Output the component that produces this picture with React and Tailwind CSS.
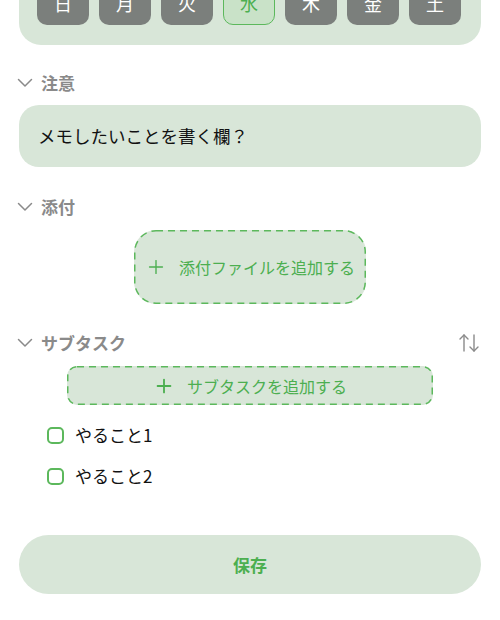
import { ArrowUpDown, Plus } from 'lucide-react';

const days = ['日', '月', '火', '水', '木', '金', '土'];

const Chevron = () => (
  <svg width="16" height="10" viewBox="0 0 16 10" fill="none" stroke="#8a8a8a" strokeWidth="1.5" strokeLinecap="round" strokeLinejoin="round">
    <polyline points="1.5,1.5 8,8 14.5,1.5" />
  </svg>
);

const SectionHeader = ({ title, right }) => (
  <div className="flex items-center justify-between h-6">
    <div className="flex items-center gap-[8px] -ml-[2px]">
      <Chevron />
      <span className="text-[17px] font-bold text-[#8a8a8a]">{title}</span>
    </div>
    {right}
  </div>
);

// dashed outline drawn over the box so the dash length matches
const DashedBox = ({ w, h, r, children, className }) => (
  <div className={`relative bg-[#d8e6d8] flex items-center justify-center ${className}`} style={{ width: w, height: h, borderRadius: r }}>
    <svg className="absolute inset-0 pointer-events-none" width={w} height={h}>
      <rect x="0.75" y="0.75" width={w - 1.5} height={h - 1.5} rx={r - 0.75} fill="none" stroke="#5cb85c" strokeWidth="1.5" strokeDasharray="7 5" />
    </svg>
    {children}
  </div>
);

export default function App() {
  return (
    <div className="w-[500px] h-[620px] overflow-hidden bg-white" style={{ fontFamily: '"Noto Sans CJK JP", "Noto Sans", sans-serif' }}>
      <div className="px-[19px] -mt-[37px]">
        {/* weekday selector */}
        <div className="bg-[#d8e6d8] rounded-[22px] px-[18px] pt-[18px] pb-[20px] flex gap-[10px]">
          {days.map((d) =>
            d === '水' ? (
              <div key={d} className="w-[52px] h-[44px] rounded-[10px] bg-[#c9e2c8] border border-[#5cb85c] flex items-center justify-center text-[18px] text-[#4caf50]">
                {d}
              </div>
            ) : (
              <div key={d} className="w-[52px] h-[44px] rounded-[10px] bg-[#7b7f7c] flex items-center justify-center text-[18px] text-white">
                {d}
              </div>
            )
          )}
        </div>

        {/* 注意 */}
        <div className="mt-[26px]">
          <SectionHeader title="注意" />
        </div>
        <div className="mt-[10px] h-[62px] rounded-[20px] bg-[#d8e6d8] flex items-center px-[19px] text-[17.5px] text-[#111]">
          メモしたいことを書く欄？
        </div>

        {/* 添付 */}
        <div className="mt-[28px]">
          <SectionHeader title="添付" />
        </div>
        <div className="mt-[11px] flex justify-center">
          <DashedBox w={232} h={74} r={22} className="gap-[12px] text-[16px] text-[#4caf50]">
            <Plus size={22} strokeWidth={1.5} />
            <span>添付ファイルを追加する</span>
          </DashedBox>
        </div>

        {/* サブタスク */}
        <div className="mt-[27px]">
          <SectionHeader
            title="サブタスク"
            right={<ArrowUpDown size={24} strokeWidth={1.4} color="#8a8a8a" />}
          />
        </div>
        <div className="mt-[11px] flex justify-center">
          <DashedBox w={366} h={39} r={10} className="gap-[12px] text-[16px] text-[#4caf50]">
            <Plus size={22} strokeWidth={2} />
            <span>サブタスクを追加する</span>
          </DashedBox>
        </div>

        <div className="mt-[19px] pl-[28px] flex flex-col gap-[19px]">
          {['やること1', 'やること2'].map((t) => (
            <div key={t} className="flex items-center gap-[11px] h-[22px]">
              <div className="w-[17px] h-[17px] rounded-[5px] border-2 border-[#5cb85c]" />
              <span className="text-[17px] text-[#111]">{t}</span>
            </div>
          ))}
        </div>

        {/* 保存 */}
        <div className="mt-[48px] h-[59px] rounded-full bg-[#d8e6d8] flex items-center justify-center text-[17px] font-bold text-[#4caf50]">
          保存
        </div>
      </div>
    </div>
  );
}
